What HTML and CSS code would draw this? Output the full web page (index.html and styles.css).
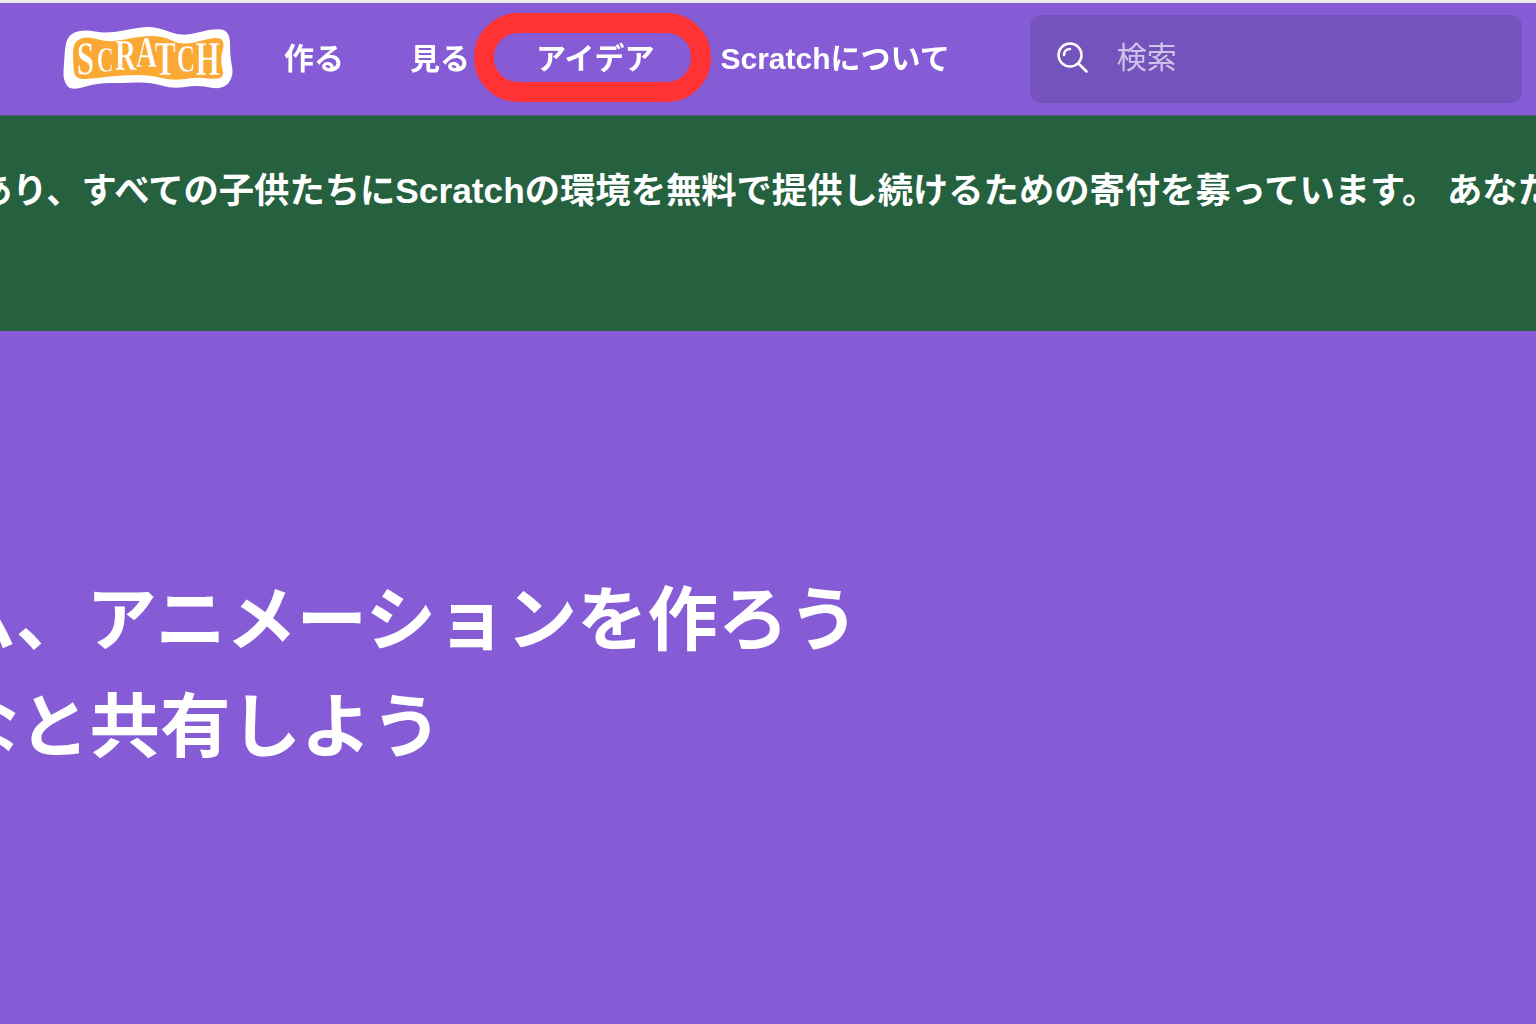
FILE: index.html
```html
<!DOCTYPE html>
<html lang="ja">
<head>
    <meta charset="UTF-8">
    <meta name="viewport" content="width=device-width, initial-scale=1.0">
    <title>Scratch</title>
    <link rel="stylesheet" href="styles.css">
</head>
<body>
    <header class="nav">
        <a class="logo" href="#">
            <svg width="172" height="66" viewBox="0 0 172 66">
                <path class="logo-edge" d="M2 23.5Q3 10 11.500 6.500Q20 3 32 5.500Q44 8 60.500 4.500Q77 1 85.500 1Q94 1 107 6Q120 11 135 6.500Q150 2 158.500 3.500Q167 5 167 18Q167 31 169 40.500Q171 50 165.500 57Q160 64 147 61.500Q134 59 122 61Q110 63 98.500 59.500Q87 56 73.500 56.500Q60 57 47 57Q34 57 21 61Q8 65 4 59.500Q0 54 .5 45.500Q1 37 2 23.500Z"/>
                <path class="logo-fill" d="M10 26.500Q10 16 17 13Q24 10 35.500 13.500Q47 17 62 13.500Q77 10 88.500 10Q100 10 110 15Q120 20 137 15Q154 10 158 13Q162 16 159.500 25Q157 34 159.500 43Q162 52 154.500 52.500Q147 53 140.500 52Q134 51 122 53Q110 55 98.500 52Q87 49 73.500 49Q60 49 47 50.500Q34 52 23 53Q12 54 11 45.500Q10 37 10 26.500Z"/>
                <text class="logo-text" transform="scale(.65 1)">
                    <tspan x="21" y="49" font-size="48">S</tspan>
                    <tspan x="52" y="46" font-size="36">C</tspan>
                    <tspan x="80" y="44" font-size="45">R</tspan>
                    <tspan x="112" y="41" font-size="45">A</tspan>
                    <tspan x="141" y="49" font-size="48">T</tspan>
                    <tspan x="175" y="46" font-size="39">C</tspan>
                    <tspan x="204" y="49" font-size="48">H</tspan>
                </text>
            </svg>
        </a>
        <nav class="nav-links">
            <a href="#">作る</a>
            <a href="#">見る</a>
            <a href="#">アイデア</a>
            <a href="#">Scratchについて</a>
        </nav>
        <div class="search">
            <svg class="search-icon" width="32" height="32" viewBox="0 0 32 32">
                <circle cx="14" cy="14" r="11.5"/>
                <path d="M22.5 22.5l8 8"/>
                <path d="M8 14c0-3.500 2.500-6 6-6"/>
            </svg>
            <span class="search-label">検索</span>
        </div>
        <span class="callout"></span>
    </header>

    <section class="banner">
        <p>あり、すべての子供たちにScratchの環境を無料で提供し続けるための寄付を募っています。 あなたの寄付</p>
    </section>

    <section class="hero">
        <h1><span>ゲーム、アニメーションを作ろう</span></h1>
        <h1><span>世界中のみんなと共有しよう</span></h1>
    </section>
</body>
</html>
```

FILE: styles.css
```css
html, body {
    height: 100%;
}

body {
    margin: 0;
    background: #855cd6;
    color: white;
    font-family: "Liberation Sans", "Noto Sans CJK JP", sans-serif;
    font-weight: bold;
    overflow: hidden;
    filter: blur(0.4px);
}

a {
    color: inherit;
    text-decoration: none;
}

.nav {
    position: relative;
    display: flex;
    align-items: center;
    height: 112px;
    border-top: 3px solid #ececec;
    border-bottom: 1px solid #4d5a6a;
    padding-left: 63px;
}

.logo {
    display: flex;
    width: 172px;
    height: 66px;
}

.logo-edge {
    fill: white;
}

.logo-fill {
    fill: #faa935;
}

.logo-text {
    font-family: "Liberation Serif", serif;
    font-weight: bold;
    fill: white;
    stroke: #faa935;
    stroke-width: 0.5;
}

.nav-links {
    display: flex;
    gap: 66px;
    margin-left: 49px;
    margin-bottom: 6px;
    font-size: 30px;
    white-space: nowrap;
}

.search {
    display: flex;
    align-items: center;
    width: 492px;
    height: 88px;
    margin-left: 80px;
    border-radius: 12px;
    background: #7553bd;
}

.search-icon {
    margin-left: 26px;
    margin-bottom: 5px;
    fill: none;
    stroke: white;
    stroke-width: 2.500;
    stroke-linecap: round;
}

.search-label {
    margin-left: 29px;
    margin-bottom: 8px;
    font-size: 30px;
    font-weight: normal;
    color: rgba(255, 255, 255, 0.65);
}

.callout {
    position: absolute;
    left: 474px;
    top: 10px;
    width: 237px;
    height: 89px;
    box-sizing: border-box;
    border: 20px solid #ff3333;
    border-radius: 44px;
}

.banner {
    height: 215px;
    background: #25613f;
    overflow: hidden;
}

.banner p {
    margin: 54px 0 0 -23px;
    font-size: 35.3px;
    line-height: 42px;
    white-space: nowrap;
}

.hero {
    padding-top: 236px;
}

.hero h1 {
    display: flex;
    justify-content: flex-end;
    width: 859px;
    margin: 0;
    overflow: hidden;
    font-size: 70.5px;
    line-height: 107px;
    white-space: nowrap;
}

.hero h1:last-child {
    width: 442px;
}
```
